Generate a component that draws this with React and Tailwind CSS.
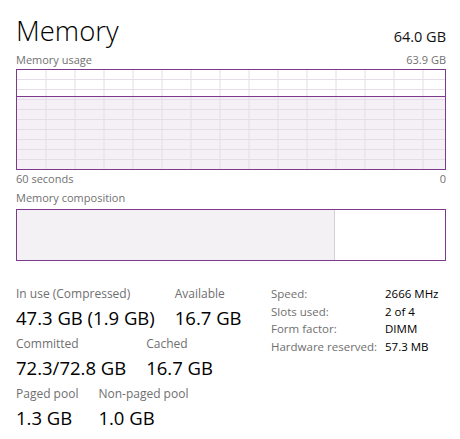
const font = { fontFamily: '"Open Sans", "Noto Sans", sans-serif' };

function UsageGraph() {
  const vLines = [];
  for (let x = 29; x < 430; x += 29) vLines.push(x);
  const hLines = [];
  for (let y = 10; y < 100; y += 10) hLines.push(y);
  return (
    <svg width="100%" height="100%" viewBox="0 0 428 99" preserveAspectRatio="none" className="block">
      <rect x="0" y="26" width="428" height="73" fill="#f5f0f6" />
      {vLines.map((x) => (
        <line key={"v" + x} x1={x} y1="0" x2={x} y2="99" stroke="#e4dce6" strokeWidth="1" />
      ))}
      {hLines.map((y) => (
        <line key={"h" + y} x1="0" y1={y - 0.5} x2="428" y2={y - 0.5} stroke="#e4dce6" strokeWidth="1" />
      ))}
      <line x1="0" y1="26.5" x2="428" y2="26.5" stroke="#7d3a8c" strokeWidth="1.2" />
    </svg>
  );
}

function Stat({ label, value }) {
  return (
    <div className="flex flex-col">
      <span className="text-[12px] leading-[16px] text-[#6f6f6f]">{label}</span>
      <span className="text-[18.5px] leading-[28px] text-black mt-[2px]">{value}</span>
    </div>
  );
}

function Spec({ label, value }) {
  return (
    <div className="flex h-[17.5px] items-center text-[11.5px]">
      <span className="w-[114px] text-[#6f6f6f]">{label}</span>
      <span className="text-black">{value}</span>
    </div>
  );
}

export default function App() {
  return (
    <div className="w-[460px] h-[439px] bg-white pl-4 pr-[14px] pt-[12px] overflow-hidden" style={font}>
      {/* Header */}
      <div className="flex items-end justify-between">
        <h1 className="text-[27.5px] leading-[38px] font-light text-black">Memory</h1>
        <span className="text-[14.5px] leading-[20px] mb-[3px] text-[#111]">64.0 GB</span>
      </div>

      <div className="flex justify-between text-[11px] leading-[16px] text-[#717171] mt-[2px]">
        <span>Memory usage</span>
        <span>63.9 GB</span>
      </div>

      {/* Usage graph */}
      <div className="h-[101px] border border-[#7d3a8c] mt-[1px]">
        <UsageGraph />
      </div>

      <div className="flex justify-between text-[11px] leading-[16px] text-[#717171] mt-[1px]">
        <span>60 seconds</span>
        <span>0</span>
      </div>

      <div className="text-[11px] leading-[16px] text-[#717171] mt-[3px]">Memory composition</div>

      {/* Composition bar */}
      <div className="h-[52px] border border-[#7d3a8c] mt-[3px] flex">
        <div className="w-[318px] bg-[#f4f1f5] border-r border-[#d4d0d6]" />
        <div className="flex-1 bg-white" />
      </div>

      {/* Stats */}
      <div className="flex mt-[25px]">
        <div className="w-[255px] flex flex-col gap-[4px]">
          <div className="flex gap-5">
            <Stat label="In use (Compressed)" value="47.3 GB (1.9 GB)" />
            <Stat label="Available" value="16.7 GB" />
          </div>
          <div className="flex gap-5">
            <Stat label="Committed" value="72.3/72.8 GB" />
            <Stat label="Cached" value="16.7 GB" />
          </div>
          <div className="flex gap-5">
            <Stat label="Paged pool" value="1.3 GB" />
            <Stat label="Non-paged pool" value="1.0 GB" />
          </div>
        </div>
        <div className="flex flex-col -mt-[1px]">
          <Spec label="Speed:" value="2666 MHz" />
          <Spec label="Slots used:" value="2 of 4" />
          <Spec label="Form factor:" value="DIMM" />
          <Spec label="Hardware reserved:" value="57.3 MB" />
        </div>
      </div>
    </div>
  );
}
